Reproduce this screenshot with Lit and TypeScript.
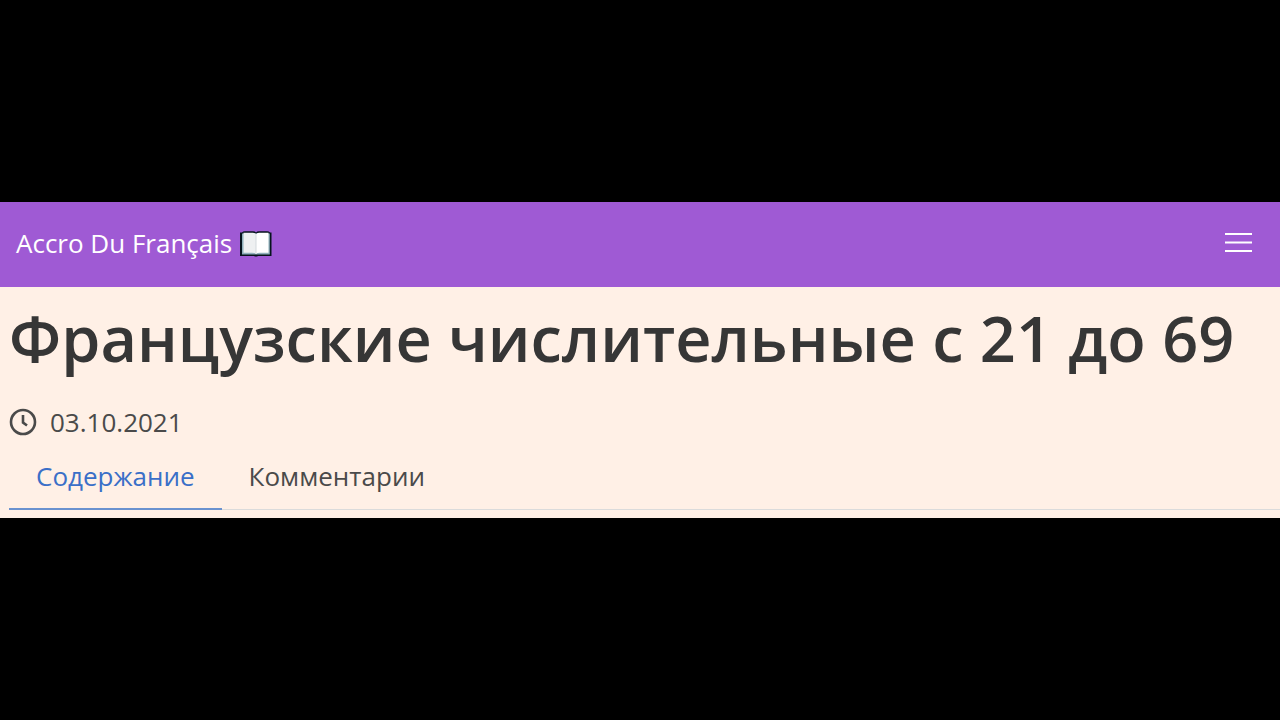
import { LitElement, html, css } from "lit";
import { customElement, state } from "lit/decorators.js";

@customElement("app-root")
export class AppRoot extends LitElement {
  static styles = css`
    :host {
      display: flex;
      flex-direction: column;
      justify-content: center;
      min-height: 100vh;
      background: #000;
      color: #363636;
      font-family: "Open Sans", "Noto Sans", sans-serif;
      font-size: 26px;
      line-height: 40px;
    }
    .nav {
      display: flex;
      align-items: center;
      justify-content: space-between;
      padding: 21px 16px 24px;
      background: #9f5ad4;
    }
    .brand {
      display: flex;
      align-items: center;
      gap: 8px;
      color: #fff;
      text-decoration: none;
    }
    .book {
      display: block;
      width: 32px;
      height: 28px;
    }
    .burger {
      display: flex;
      padding: 0 10px;
      border: 0;
      background: none;
      color: #fff;
      cursor: pointer;
    }
    .burger svg {
      display: block;
      width: 30px;
      height: 24px;
    }
    .page {
      padding: 7px 0 8px 9px;
      background: #fff0e6;
    }
    .title {
      margin: 0;
      font-size: 63px;
      font-weight: 600;
      line-height: 88px;
    }
    .date {
      display: flex;
      align-items: center;
      gap: 13px;
      margin-top: 20px;
      color: #4a4a4a;
    }
    .clock {
      display: block;
      width: 28px;
      height: 28px;
    }
    .tabs {
      display: flex;
      margin-top: 14px;
      border-bottom: 1px solid #dbdbdb;
    }
    .tab {
      margin-bottom: -1px;
      padding: 0 27px 12px;
      border: 0;
      border-bottom: 2px solid transparent;
      background: none;
      color: #4a4a4a;
      font: inherit;
      cursor: pointer;
    }
    .tab[aria-selected="true"] {
      border-bottom-color: #6a92cf;
      color: #3a6fc8;
    }
  `;

  @state() private active = 0;

  private tabs = ["Содержание", "Комментарии"];

  render() {
    return html`
      <nav class="nav">
        <a class="brand" href="#">
          <span>Accro Du Français</span>
          <svg class="book" viewBox="0 0 32 28" aria-hidden="true">
            <path d="M0 3.500H2Q3 2.200 5 2.200H13Q15 2.200 16 3.500Q17 2.200 19 2.200H27Q29 2.200 30 3.500H31.500V27H18Q16 28 14 27H0Z" fill="#07141d" />
            <path d="M2 4.500V25.500H29.800V4.500Z" fill="#8fb0bb" />
            <path d="M3.500 3.700H13Q15.500 3.700 16 5.500V25Q15 23.800 12 23.800H3.500Z" fill="#eef0f1" />
            <path d="M28.500 3.700H19Q16.500 3.700 16 5.500V25Q17 23.800 20 23.800H28.500Z" fill="#fff" />
            <path d="M16 5.500V25" stroke="#d3d9dc" stroke-width="1" />
          </svg>
        </a>
        <button class="burger" aria-label="Menu">
          <svg viewBox="0 0 30 24" fill="none" stroke="currentColor" stroke-width="2" aria-hidden="true">
            <path d="M1 3H28M1 11.500H28M1 20H28" />
          </svg>
        </button>
      </nav>
      <main class="page">
        <h1 class="title">Французские числительные с 21 до 69</h1>
        <div class="date">
          <svg class="clock" viewBox="0 0 28 28" fill="none" stroke="currentColor" aria-hidden="true">
            <circle cx="14" cy="14" r="12" stroke-width="2.600" />
            <path d="M14 7V14.500L18 17.500" stroke-width="2.600" />
          </svg>
          <time datetime="2021-10-03">03.10.2021</time>
        </div>
        <div class="tabs" role="tablist">
          ${this.tabs.map(
            (label, i) => html`<button
              class="tab"
              role="tab"
              aria-selected=${this.active === i ? "true" : "false"}
              @click=${() => (this.active = i)}
            >${label}</button>`
          )}
        </div>
      </main>
    `;
  }
}
